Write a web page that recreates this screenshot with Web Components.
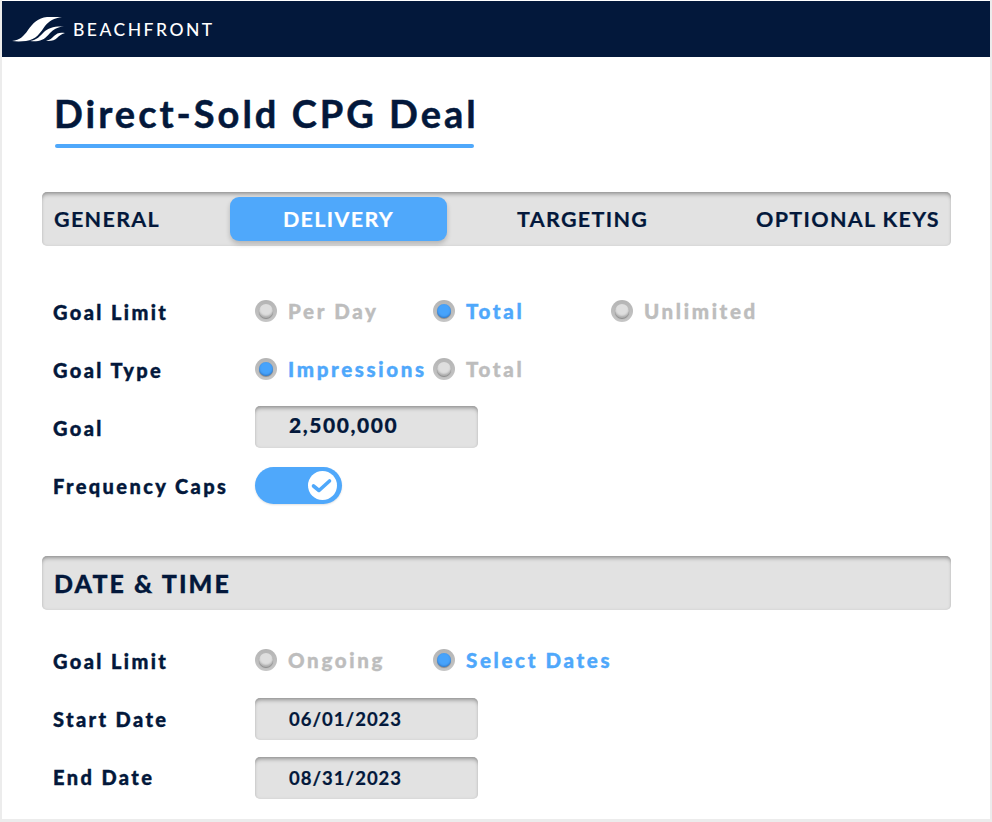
<!DOCTYPE html>
<html>
<head>
<meta charset="utf-8">
<style>
  html, body { margin: 0; background: #ececec; }
  body { font-family: Lato, sans-serif; color: #03183b; }
</style>
</head>
<body>
<deal-page>
  <top-bar></top-bar>
  <deal-title>Direct-Sold CPG Deal</deal-title>
  <tab-bar></tab-bar>
  <form-row label="Goal Limit" style="margin-top:44px">
    <radio-item>Per Day</radio-item>
    <radio-item checked>Total</radio-item>
    <radio-item>Unlimited</radio-item>
  </form-row>
  <form-row label="Goal Type">
    <radio-item checked>Impressions</radio-item>
    <radio-item>Total</radio-item>
  </form-row>
  <form-row label="Goal"><text-box big>2,500,000</text-box></form-row>
  <form-row label="Frequency Caps"><check-toggle></check-toggle></form-row>
  <section-bar>DATE &amp; TIME</section-bar>
  <form-row label="Goal Limit" style="margin-top:29px">
    <radio-item>Ongoing</radio-item>
    <radio-item checked>Select Dates</radio-item>
  </form-row>
  <form-row label="Start Date"><text-box style="margin:1px 0 -1px">06/01/2023</text-box></form-row>
  <form-row label="End Date"><text-box style="margin:2px 0 -2px">08/31/2023</text-box></form-row>
</deal-page>

<script>
const SHEET_BAR = `
  background: #e2e2e2;
  border-radius: 5px;
  box-shadow: inset 0 4px 4px -2px rgba(0,0,0,.34), inset 0 0 3px rgba(0,0,0,.1);
`;

class DealPage extends HTMLElement {
  constructor() {
    super();
    this.attachShadow({ mode: 'open' }).innerHTML = `
      <style>
        :host {
          display: block;
          box-sizing: border-box;
          width: 988px;
          height: 819px;
          margin-left: 2px;
          background: #fff;
          overflow: hidden;
        }
      </style>
      <slot></slot>`;
  }
}

class TopBar extends HTMLElement {
  constructor() {
    super();
    this.attachShadow({ mode: 'open' }).innerHTML = `
      <style>
        :host {
          display: flex;
          align-items: center;
          height: 56px;
          margin-top: 1px;
          padding-left: 10px;
          gap: 7px;
          background: #03183b;
        }
        span {
          color: #fff;
          font: 500 17.5px Lato, sans-serif;
          letter-spacing: 2.5px;
        }
        svg { display: block; }
      </style>
      <svg width="54" height="26" viewBox="12 16 54 26">
        <path fill="#fff" d="M12 41C20 40 24 36 28 30C33 23 38 18 47 17L62 17C54 18 49 21 45 26C41 32 36 40 26 41C21 41.500 16 41.500 12 41Z"/>
        <path fill="#fff" d="M30 41C37 40 40 36 44 32C48 28 54 26 64 26.500C57 27 53 30 50 33C46 38 42 41 36 41.300C34 41.400 32 41.300 30 41Z"/>
        <path fill="#fff" d="M46 41C50 40 52 38 54 36C57 33 60 32 65 33C61 34 59 36 57 38C55 40 52 41.300 46 41Z"/>
      </svg>
      <span>BEACHFRONT</span>`;
  }
}

class DealTitle extends HTMLElement {
  constructor() {
    super();
    this.attachShadow({ mode: 'open' }).innerHTML = `
      <style>
        :host {
          display: block;
          width: max-content;
          margin: 33px 0 0 52px;
          font: 700 38px/46px Lato, sans-serif;
          letter-spacing: 3px;
          -webkit-text-stroke: .5px currentColor;
          color: #03183b;
        }
        .rule {
          width: 419px;
          height: 4px;
          margin: 8px 0 0 1px;
          border-radius: 2px;
          background: #4fa8fb;
        }
      </style>
      <slot></slot>
      <div class="rule"></div>`;
  }
}

class TabBar extends HTMLElement {
  constructor() {
    super();
    this.attachShadow({ mode: 'open' }).innerHTML = `
      <style>
        :host {
          display: grid;
          grid-template-columns: 176px 217px 1fr auto;
          align-items: center;
          box-sizing: border-box;
          width: 909px;
          height: 54px;
          margin: 44px 0 0 40px;
          padding: 5px 11px 5px 12px;
          font: 700 21.5px Lato, sans-serif;
          letter-spacing: 1.32px;
          -webkit-text-stroke: .2px currentColor;
          color: #03183b;
          ${SHEET_BAR}
        }
        .active {
          height: 44px;
          line-height: 44px;
          text-align: center;
          color: #fff;
          background: #4fa8fb;
          border-radius: 9px;
          box-shadow: 0 3px 5px rgba(0,0,0,.2);
        }
        .mid { padding-left: 70px; }
      </style>
      <div>GENERAL</div>
      <div class="active">DELIVERY</div>
      <div class="mid">TARGETING</div>
      <div>OPTIONAL KEYS</div>`;
  }
}

class FormRow extends HTMLElement {
  constructor() {
    super();
    this.attachShadow({ mode: 'open' }).innerHTML = `
      <style>
        :host {
          display: grid;
          grid-template-columns: 202px repeat(3, 178px);
          align-items: center;
          height: 42px;
          margin: 16px 0 0 51px;
        }
        label {
          font: 900 20px Lato, sans-serif;
          letter-spacing: 2.4px;
          -webkit-text-stroke: .4px currentColor;
          color: #03183b;
          margin-top: 1px;
        }
      </style>
      <label></label>
      <slot></slot>`;
    this.shadowRoot.querySelector('label').textContent = this.getAttribute('label');
  }
}

class RadioItem extends HTMLElement {
  constructor() {
    super();
    this.attachShadow({ mode: 'open' }).innerHTML = `
      <style>
        :host {
          display: flex;
          align-items: center;
          gap: 11px;
          font: 900 20.5px Lato, sans-serif;
          letter-spacing: 2.65px;
          -webkit-text-stroke: .4px currentColor;
          color: #bdbdbd;
          white-space: nowrap;
        }
        :host([checked]) { color: #4fa8fb; }
        .dot {
          box-sizing: border-box;
          flex: none;
          width: 22px;
          height: 22px;
          border-radius: 50%;
          background: linear-gradient(#b4b4b4, #c6c6c6);
          padding: 4px;
        }
        .dot i {
          display: block;
          width: 14px;
          height: 14px;
          border-radius: 50%;
          background: #dedede;
          box-shadow: inset 0 -2px 2px rgba(0,0,0,.22), 0 1px 1px rgba(0,0,0,.3);
        }
        :host([checked]) .dot i {
          background: #47a3fb;
          box-shadow: inset 0 -1px 2px rgba(0,40,110,.35), 0 1px 1px rgba(0,0,0,.3);
        }
      </style>
      <span class="dot"><i></i></span>
      <slot></slot>`;
  }
}

class TextBox extends HTMLElement {
  constructor() {
    super();
    this.attachShadow({ mode: 'open' }).innerHTML = `
      <style>
        :host {
          display: block;
          box-sizing: border-box;
          grid-column: span 2;
          width: 223px;
          height: 42px;
          padding-left: 34px;
          font: 700 18.5px/42px Lato, sans-serif;
          letter-spacing: 1px;
          -webkit-text-stroke: .2px currentColor;
          color: #03183b;
          ${SHEET_BAR}
        }
        :host([big]) { font-size: 21px; line-height: 38px; font-weight: 900; letter-spacing: 1.55px; }
      </style>
      <slot></slot>`;
  }
}

class CheckToggle extends HTMLElement {
  constructor() {
    super();
    this.attachShadow({ mode: 'open' }).innerHTML = `
      <style>
        :host {
          display: flex;
          align-items: center;
          justify-content: flex-end;
          box-sizing: border-box;
          width: 87px;
          height: 37px;
          padding-right: 5px;
          margin-top: 1px;
          border-radius: 19px;
          background: #4fa8fb;
          box-shadow: 0 1px 2px rgba(0,0,0,.12);
        }
        svg { display: block; }
      </style>
      <svg width="29" height="29" viewBox="0 0 29 29">
        <circle cx="14.5" cy="14.500" r="14.500" fill="#fff"/>
        <path d="M5.500 15l5.500 4.500 10.500-9.500" fill="none" stroke="#4fa8fb" stroke-width="3.600" stroke-linecap="round" stroke-linejoin="round"/>
      </svg>`;
  }
}

class SectionBar extends HTMLElement {
  constructor() {
    super();
    this.attachShadow({ mode: 'open' }).innerHTML = `
      <style>
        :host {
          display: flex;
          align-items: center;
          box-sizing: border-box;
          width: 909px;
          height: 54px;
          margin: 50px 0 0 40px;
          padding-left: 12px;
          font: 900 25px Lato, sans-serif;
          letter-spacing: 2.1px;
          -webkit-text-stroke: .3px currentColor;
          color: #03183b;
          ${SHEET_BAR}
        }
      </style>
      <slot></slot>`;
  }
}

customElements.define('deal-page', DealPage);
customElements.define('top-bar', TopBar);
customElements.define('deal-title', DealTitle);
customElements.define('tab-bar', TabBar);
customElements.define('form-row', FormRow);
customElements.define('radio-item', RadioItem);
customElements.define('text-box', TextBox);
customElements.define('check-toggle', CheckToggle);
customElements.define('section-bar', SectionBar);
</script>
</body>
</html>
